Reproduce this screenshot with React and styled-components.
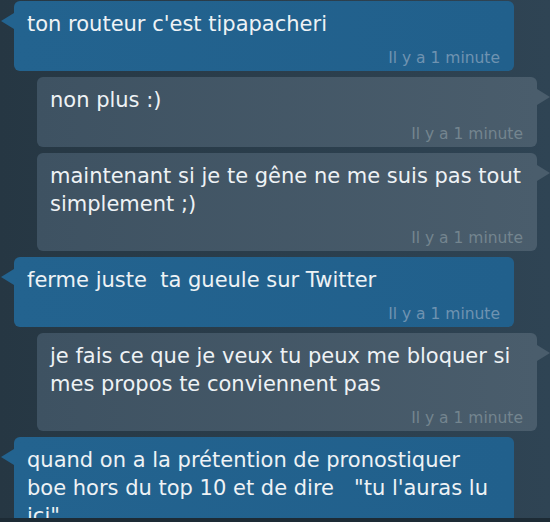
import React from 'react'
import styled, { createGlobalStyle, css } from 'styled-components'

const GlobalStyle = createGlobalStyle`
	body {
		margin: 0;
		background: #1d2b35;
	}
`

const Screen = styled.div`
	height: 518px;
	overflow: hidden;
	background: linear-gradient(to right, #263743, #2f4454);
	padding-top: 1px;
	box-sizing: border-box;
	display: flex;
	flex-direction: column;
	gap: 6px;
	font-family: "DejaVu Sans", "Liberation Sans", sans-serif;
`

const incoming = css`
	margin-left: 14px;
	background: linear-gradient(to right, #23638f, #21608c);

	&::before {
		left: -13px;
		border-right: 13px solid #23638f;
	}
`

const outgoing = css`
	margin-left: 37px;
	background: linear-gradient(to right, #3e5262, #4a5d6c);

	&::before {
		right: -13px;
		border-left: 13px solid #4a5d6c;
	}
`

const Bubble = styled.div`
	position: relative;
	width: 500px;
	flex-shrink: 0;
	box-sizing: border-box;
	padding: 9px 10px 3px 13px;
	border-radius: 6px;
	${({ side }) => side === 'out' ? outgoing : incoming}

	&::before {
		content: '';
		position: absolute;
		top: 12px;
		border-top: 8px solid transparent;
		border-bottom: 8px solid transparent;
	}
`

const Text = styled.div`
	font-size: 21px;
	line-height: 28px;
	color: #eef2f5;
	white-space: pre-wrap;
`

const Time = styled.div`
	margin-top: 10px;
	padding-right: 4px;
	text-align: right;
	font-size: 15.5px;
	line-height: 20px;
	color: ${({ side }) => side === 'out' ? '#74858f' : '#6f93b1'};
`

const messages = [
	{ side: 'in', text: "ton routeur c'est tipapacheri" },
	{ side: 'out', text: 'non plus :)' },
	{ side: 'out', text: 'maintenant si je te gêne ne me suis pas tout simplement ;)' },
	{ side: 'in', text: 'ferme juste  ta gueule sur Twitter' },
	{ side: 'out', text: 'je fais ce que je veux tu peux me bloquer si mes propos te conviennent pas' },
	{ side: 'in', text: 'quand on a la prétention de pronostiquer boe hors du top 10 et de dire   "tu l\'auras lu ici"' },
]

const App = () => (
	<>
		<GlobalStyle />
		<Screen>
			{messages.map((msg, i) => (
				<Bubble key={i} side={msg.side}>
					<Text>{msg.text}</Text>
					<Time side={msg.side}>Il y a 1 minute</Time>
				</Bubble>
			))}
		</Screen>
	</>
)

export default App
